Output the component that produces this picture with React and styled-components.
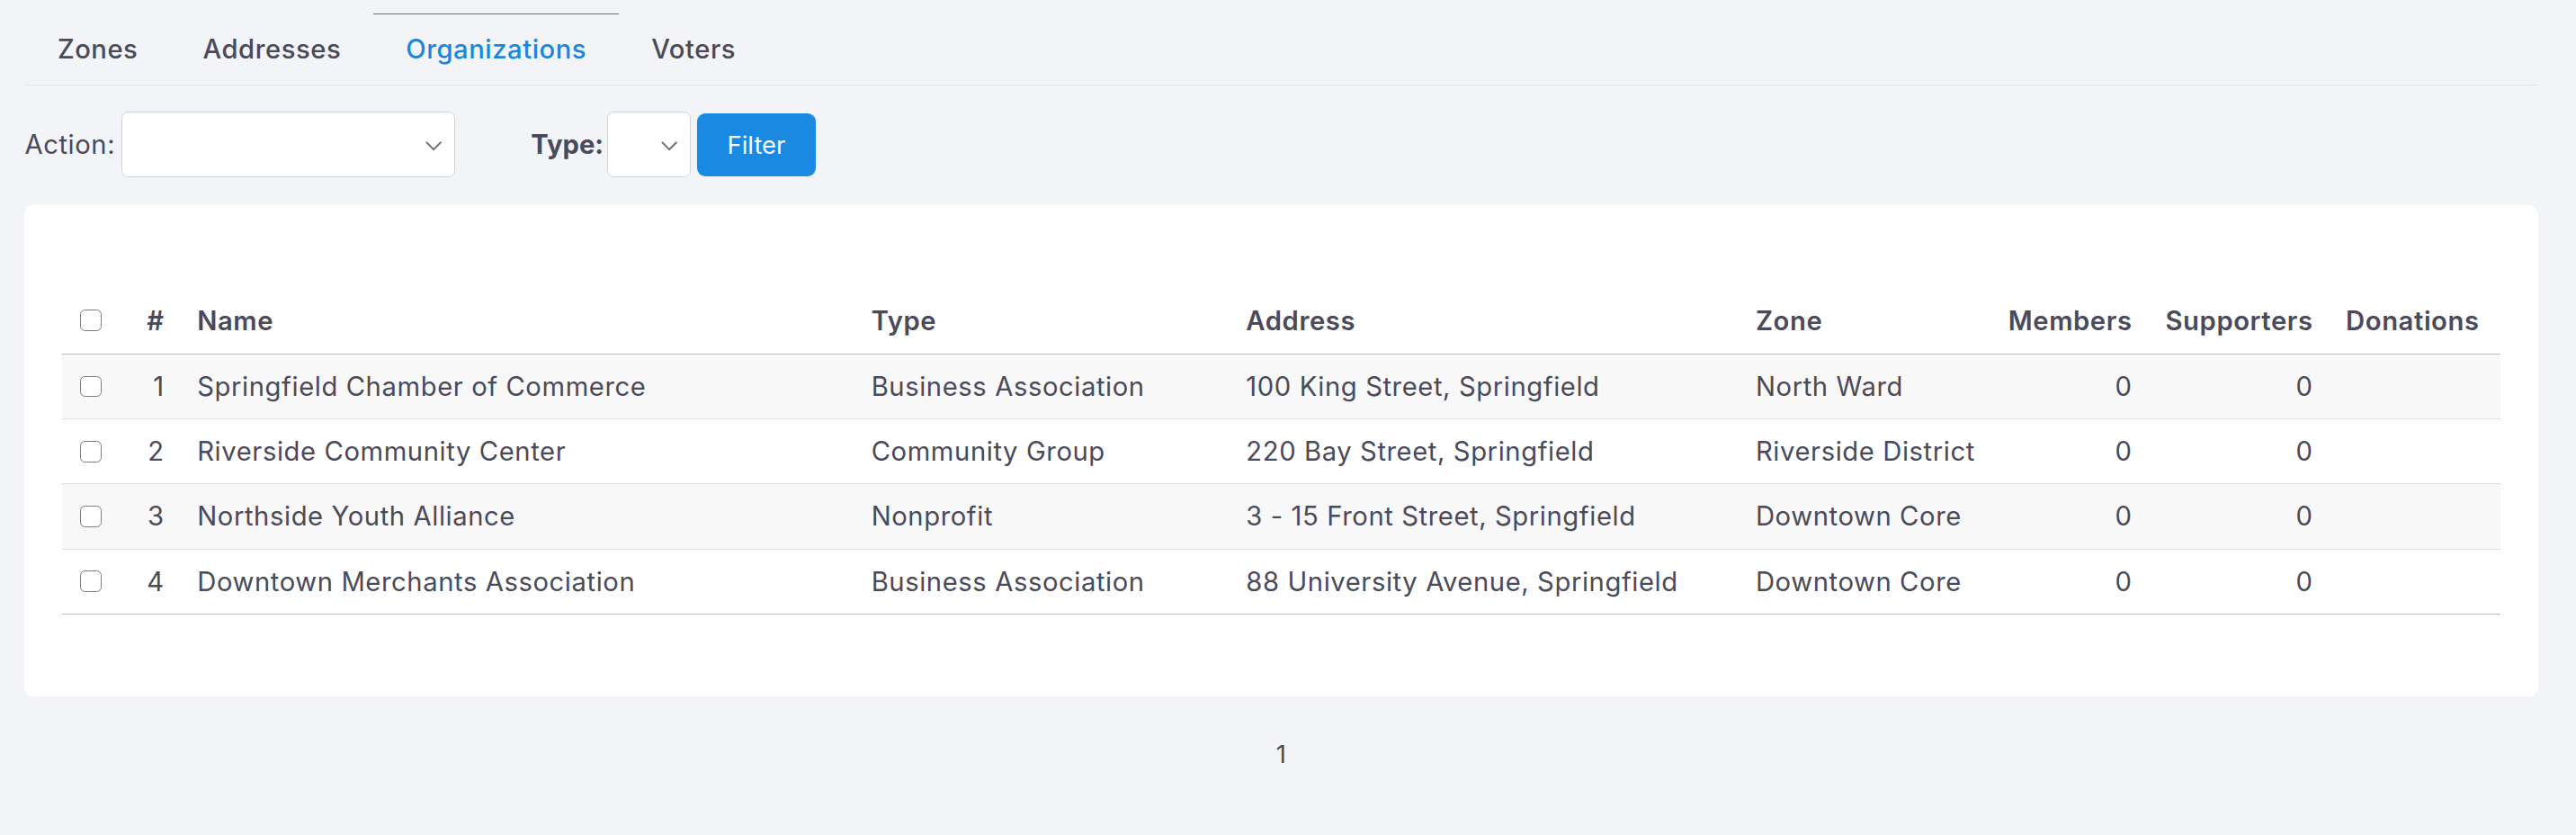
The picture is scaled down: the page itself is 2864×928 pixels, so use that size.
import React from "react";
import styled, { createGlobalStyle } from "styled-components";

// the reference is a 1568px wide layout shown at 2864px
const SCALE = 2864 / 1568;

const GlobalStyle = createGlobalStyle`
  html, body {
    margin: 0;
    padding: 0;
    background: #f3f4f7;
  }
  body {
    font-family: Inter, "Noto Sans", sans-serif;
    color: #4a4a5a;
  }
`;

const Page = styled.div`
  zoom: ${SCALE};
  width: 1568px;
  min-height: 508px;
  box-sizing: border-box;
  padding: 8px 23px 0 15px;
  font-size: 16px;
  letter-spacing: 0.02em;
`;

const TabBar = styled.nav`
  display: flex;
  border-bottom: 1px solid #e3e5e9;
`;

const Tab = styled.a`
  display: block;
  padding: 0 19.5px 0 20px;
  height: 43px;
  line-height: 43px;
  letter-spacing: 0.018em;
  border-top: 1px solid ${({ $active }) => ($active ? "#1a87df" : "transparent")};
  color: ${({ $active }) => ($active ? "#1a87df" : "#4a4a5a")};
  font-weight: 500;
  cursor: pointer;
`;

const Toolbar = styled.form`
  display: flex;
  align-items: center;
  height: 40px;
  margin-top: 16px;
`;

const Label = styled.label`
  font-weight: ${({ $bold }) => ($bold ? 700 : 400)};
  letter-spacing: ${({ $bold }) => ($bold ? 0 : "0.02em")};
  margin-left: ${({ $offset }) => $offset || 0}px;
  margin-right: ${({ $bold }) => ($bold ? 2 : 4)}px;
`;

const SelectWrap = styled.div`
  position: relative;
  width: ${({ $width }) => $width}px;
  height: 40px;
`;

const Select = styled.select`
  appearance: none;
  width: 100%;
  height: 100%;
  box-sizing: border-box;
  border: 1px solid #cfd3d9;
  border-radius: 4px;
  background: #fff;
  font: inherit;
  color: inherit;
  padding: 0 24px 0 10px;
`;

const Chevron = styled.svg`
  position: absolute;
  right: 8px;
  top: 18px;
  pointer-events: none;
`;

const FilterButton = styled.button`
  margin-left: 4px;
  width: 72px;
  height: 38px;
  border: none;
  border-radius: 5px;
  background: #1a89e2;
  color: #fff;
  font: inherit;
  font-size: 15px;
  cursor: pointer;
`;

const Card = styled.section`
  margin-top: 17px;
  background: #fff;
  border-radius: 6px;
  padding: 50px 23px 50px;
`;

const Table = styled.table`
  width: 100%;
  border-collapse: collapse;
  table-layout: fixed;
`;

const HeadCell = styled.th`
  height: 40px;
  padding: 0 10px;
  text-align: ${({ $align }) => $align || "left"};
  font-weight: 600;
  border-bottom: 1px solid #bdbdbd;
  white-space: nowrap;
`;

const Row = styled.tr`
  background: ${({ $striped }) => ($striped ? "#f8f8f8" : "#fff")};
  border-bottom: 1px solid ${({ $last }) => ($last ? "#bdbdbd" : "#dedede")};
`;

const Cell = styled.td`
  height: 39px;
  padding: 0 10px;
  text-align: ${({ $align }) => $align || "left"};
  white-space: nowrap;
`;

const Check = styled.input.attrs({ type: "checkbox" })`
  appearance: none;
  display: block;
  width: 13px;
  height: 13px;
  margin: 0 0 0 1px;
  border: 1px solid #7c7c7c;
  border-radius: 3px;
  background: #fff;
`;

const Pager = styled.div`
  margin-top: 25px;
  text-align: center;
  line-height: 20px;
  font-size: 15px;
`;

const columns = [
  { key: "cb", width: 34 },
  { key: "num", label: "#", width: 38, align: "right" },
  { key: "name", label: "Name", width: 410 },
  { key: "type", label: "Type", width: 228 },
  { key: "address", label: "Address", width: 310 },
  { key: "zone", label: "Zone", width: 153 },
  { key: "members", label: "Members", width: 96, align: "right" },
  { key: "supporters", label: "Supporters", width: 110, align: "right" },
  { key: "donations", label: "Donations", width: 104 },
];

const organizations = [
  {
    num: 1,
    name: "Springfield Chamber of Commerce",
    type: "Business Association",
    address: "100 King Street, Springfield",
    zone: "North Ward",
    members: 0,
    supporters: 0,
  },
  {
    num: 2,
    name: "Riverside Community Center",
    type: "Community Group",
    address: "220 Bay Street, Springfield",
    zone: "Riverside District",
    members: 0,
    supporters: 0,
  },
  {
    num: 3,
    name: "Northside Youth Alliance",
    type: "Nonprofit",
    address: "3 - 15 Front Street, Springfield",
    zone: "Downtown Core",
    members: 0,
    supporters: 0,
  },
  {
    num: 4,
    name: "Downtown Merchants Association",
    type: "Business Association",
    address: "88 University Avenue, Springfield",
    zone: "Downtown Core",
    members: 0,
    supporters: 0,
  },
];

const tabs = ["Zones", "Addresses", "Organizations", "Voters"];

const DropDown = ({ width }) => (
  <SelectWrap $width={width}>
    <Select>
      <option value=""></option>
    </Select>
    <Chevron width="10" height="6" viewBox="0 0 10 6">
      <polyline
        points="0.5,0.5 5,5 9.5,0.5"
        fill="none"
        stroke="#6b6b72"
        strokeWidth="1.1"
      />
    </Chevron>
  </SelectWrap>
);

const App = () => {
  return (
    <>
      <GlobalStyle />
      <Page>
        <TabBar>
          {tabs.map((tab) => (
            <Tab key={tab} $active={tab === "Organizations"}>
              {tab}
            </Tab>
          ))}
        </TabBar>

        <Toolbar onSubmit={(e) => e.preventDefault()}>
          <Label>Action:</Label>
          <DropDown width={203} />
          <Label $bold $offset={46}>
            Type:
          </Label>
          <DropDown width={51} />
          <FilterButton type="submit">Filter</FilterButton>
        </Toolbar>

        <Card>
          <Table>
            <colgroup>
              {columns.map((col) => (
                <col key={col.key} style={{ width: col.width }} />
              ))}
            </colgroup>
            <thead>
              <tr>
                {columns.map((col) => (
                  <HeadCell key={col.key} $align={col.align}>
                    {col.key === "cb" ? <Check /> : col.label}
                  </HeadCell>
                ))}
              </tr>
            </thead>
            <tbody>
              {organizations.map((org, i) => (
                <Row
                  key={org.num}
                  $striped={i % 2 === 0}
                  $last={i === organizations.length - 1}
                >
                  {columns.map((col) => (
                    <Cell key={col.key} $align={col.align}>
                      {col.key === "cb" ? <Check /> : org[col.key]}
                    </Cell>
                  ))}
                </Row>
              ))}
            </tbody>
          </Table>
        </Card>

        <Pager>1</Pager>
      </Page>
    </>
  );
};

export default App;
